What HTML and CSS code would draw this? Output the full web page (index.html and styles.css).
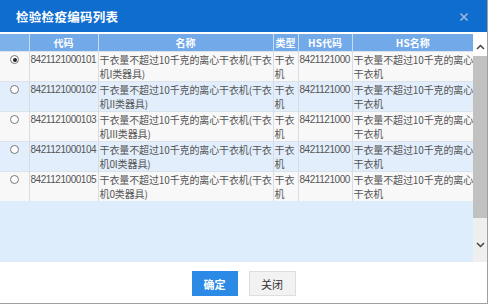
FILE: index.html
```html
<!DOCTYPE html>
<html lang="zh-CN">
<head>
<meta charset="utf-8">
<title>检验检疫编码列表</title>
<link rel="stylesheet" href="styles.css">
</head>
<body>
<div class="dialog">
  <div class="titlebar">
    <span class="title">检验检疫编码列表</span>
    <svg class="close" width="10" height="10" viewBox="0 0 10 10"><path d="M1.5 1.5 L8.5 8.5 M8.5 1.5 L1.5 8.5" stroke="#9cb9dc" stroke-width="1.6" fill="none"/></svg>
  </div>
  <div class="gridwrap">
    <div class="gridbody">
      <table class="grid">
        <colgroup>
          <col class="c-radio"><col class="c-code"><col class="c-name"><col class="c-type"><col class="c-hs"><col class="c-hsname">
        </colgroup>
        <thead>
          <tr><th></th><th>代码</th><th>名称</th><th>类型</th><th>HS代码</th><th>HS名称</th></tr>
        </thead>
        <tbody>
          <tr class="odd">
            <td class="radio"><span class="rb on"></span></td>
            <td class="code">8421121000101</td>
            <td class="cjk">干衣量不超过10千克的离心干衣机(干衣<br>机I类器具)</td>
            <td class="cjk">干衣<br>机</td>
            <td class="code">8421121000</td>
            <td class="cjk">干衣量不超过10千克的离心<br>干衣机</td>
          </tr>
          <tr class="even">
            <td class="radio"><span class="rb"></span></td>
            <td class="code">8421121000102</td>
            <td class="cjk">干衣量不超过10千克的离心干衣机(干衣<br>机II类器具)</td>
            <td class="cjk">干衣<br>机</td>
            <td class="code">8421121000</td>
            <td class="cjk">干衣量不超过10千克的离心<br>干衣机</td>
          </tr>
          <tr class="odd">
            <td class="radio"><span class="rb"></span></td>
            <td class="code">8421121000103</td>
            <td class="cjk">干衣量不超过10千克的离心干衣机(干衣<br>机III类器具)</td>
            <td class="cjk">干衣<br>机</td>
            <td class="code">8421121000</td>
            <td class="cjk">干衣量不超过10千克的离心<br>干衣机</td>
          </tr>
          <tr class="even">
            <td class="radio"><span class="rb"></span></td>
            <td class="code">8421121000104</td>
            <td class="cjk">干衣量不超过10千克的离心干衣机(干衣<br>机0I类器具)</td>
            <td class="cjk">干衣<br>机</td>
            <td class="code">8421121000</td>
            <td class="cjk">干衣量不超过10千克的离心<br>干衣机</td>
          </tr>
          <tr class="odd">
            <td class="radio"><span class="rb"></span></td>
            <td class="code">8421121000105</td>
            <td class="cjk">干衣量不超过10千克的离心干衣机(干衣<br>机0类器具)</td>
            <td class="cjk">干衣<br>机</td>
            <td class="code">8421121000</td>
            <td class="cjk">干衣量不超过10千克的离心<br>干衣机</td>
          </tr>
        </tbody>
      </table>
    </div>
    <div class="scrollbar">
      <div class="sb-btn up"><svg width="9" height="6" viewBox="0 0 9 6"><path d="M1 5 L4.5 1.5 L8 5" stroke="#444" stroke-width="1.5" fill="none"/></svg></div>
      <div class="sb-thumb"></div>
      <div class="sb-track"></div>
      <div class="sb-btn down"><svg width="9" height="6" viewBox="0 0 9 6"><path d="M1 1 L4.5 4.5 L8 1" stroke="#444" stroke-width="1.5" fill="none"/></svg></div>
      <div class="sb-end"></div>
    </div>
  </div>
  <div class="footer">
    <button class="btn primary">确定</button>
    <button class="btn">关闭</button>
  </div>
</div>
</body>
</html>
```

FILE: styles.css
```css
html, body {
  margin: 0;
  padding: 0;
  background: #ffffff;
  overflow: hidden;
}
body {
  font-family: "Liberation Sans", "Noto Sans CJK SC", sans-serif;
  color: #333;
}
.dialog {
  width: 487px;
  height: 303px;
  border-right: 1px solid #a0a0a0;
  border-bottom: 1px solid #a0a0a0;
  display: flex;
  flex-direction: column;
  background: #fff;
}
.titlebar {
  height: 32px;
  flex: none;
  background: #0f6dcf;
  display: flex;
  align-items: center;
  justify-content: space-between;
  padding: 0 18px 0 16px;
}
.title {
  color: #fff;
  font-family: "Noto Sans CJK SC", sans-serif;
  font-size: 12.5px;
  font-weight: bold;
  letter-spacing: 0.3px;
  margin-top: 1px;
}
.close {
  display: block;
  margin-top: 1px;
}
.gridwrap {
  height: 228px;
  flex: none;
  margin-top: 2px;
  display: flex;
}
.gridbody {
  width: 473px;
  background: #deedfc;
}
.grid {
  border-collapse: collapse;
  table-layout: fixed;
  width: 473px;
  font-size: 10px;
}
.c-radio { width: 29px; }
.c-code { width: 69px; }
.c-name { width: 175px; }
.c-type { width: 25px; }
.c-hs { width: 54px; }
.c-hsname { width: 121px; }
.grid th {
  height: 17px;
  padding: 0;
  background: #72a9e9;
  color: #fff;
  font-family: "Noto Sans CJK SC", sans-serif;
  font-weight: bold;
  font-size: 10px;
  text-align: center;
  border-left: 1px solid #c8dcf3;
  line-height: 17px;
}
.grid th:first-child {
  border-left: none;
  background: #7db1ea;
}
.grid td {
  padding: 0.5px 0 0 1px;
  vertical-align: top;
  line-height: 14px;
  border-left: 1px solid #d6dde6;
  border-top: 1px solid #dde3ea;
  white-space: nowrap;
  overflow: hidden;
  color: #555;
}
.grid td.cjk {
  font-family: "Noto Sans CJK SC", sans-serif;
  letter-spacing: -0.12px;
}
.grid td:first-child { border-left: none; }
.grid td.code {
  font-family: "Liberation Sans", sans-serif;
  letter-spacing: -0.45px;
  padding-left: 1px;
}
.grid tr.odd td { background: #f8f8f8; }
.grid tr.even td { background: #e2eefb; }
.grid td.radio {
  text-align: center;
  padding: 3px 0 0 0;
  height: 26px;
}
.rb {
  display: inline-block;
  width: 9px;
  height: 9px;
  border: 1px solid #777;
  border-radius: 50%;
  background: #fff;
  box-sizing: border-box;
  position: relative;
  margin-left: 1px;
  vertical-align: top;
}
.rb.on::after {
  content: "";
  position: absolute;
  left: 1.5px;
  top: 1.5px;
  width: 4px;
  height: 4px;
  border-radius: 50%;
  background: #222;
}
.scrollbar {
  width: 14px;
  display: flex;
  flex-direction: column;
  background: #efefef;
}
.sb-btn {
  height: 20px;
  display: flex;
  align-items: center;
  justify-content: center;
  flex: none;
}
.sb-btn.up {
  background: #fff;
  height: 22px;
  padding-top: 4px;
  box-sizing: border-box;
}
.sb-thumb {
  height: 162px;
  background: #c1c1c1;
  flex: none;
}
.sb-track {
  height: 17px;
  flex: none;
}
.sb-btn.down {
  height: 20px;
}
.sb-end { flex: 1; }
.footer {
  flex: 1;
  display: flex;
  justify-content: center;
  gap: 11px;
  padding-top: 9px;
}
.btn {
  width: 47px;
  height: 25px;
  border: 1px solid #dedede;
  background: #f2f2f2;
  color: #333;
  font-family: "Noto Sans CJK SC", sans-serif;
  font-size: 11px;
  padding: 0;
  border-radius: 0;
}
.btn.primary {
  width: 46px;
  background: #2b8ae5;
  border-color: #2b8ae5;
  color: #fff;
  font-weight: bold;
}
```
